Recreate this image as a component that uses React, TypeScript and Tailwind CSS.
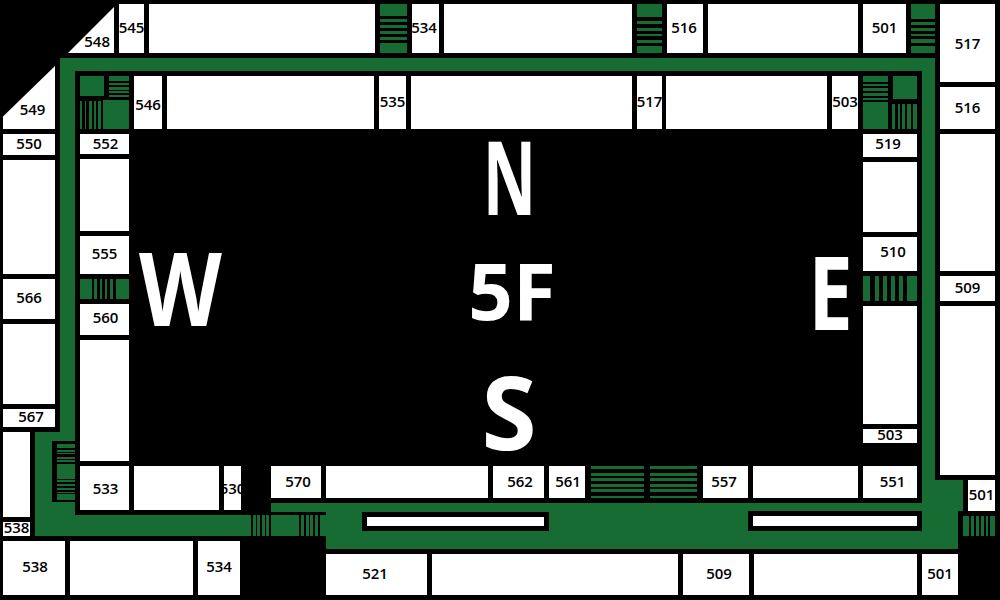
import type { ReactNode } from "react";

const G = "bg-[#166c32]";

function Room({ c, n, s }: { c: string; n?: string; s?: string }) {
  return (
    <div className={`${c} ${s ?? ""} shrink-0 bg-white flex items-center justify-center whitespace-nowrap text-[15px] leading-none font-semibold text-black`}>
      {n ? <span className="mb-[2px]">{n}</span> : null}
    </div>
  );
}

function Stair({ c, bars }: { c: string; bars: string[] }) {
  return (
    <div className={`${c} shrink-0 flex`}>
      {bars.map((b, k) => (
        <i key={k} className={`block ${G} ${b}`} />
      ))}
    </div>
  );
}

function Wing({ c, children }: { c: string; children: ReactNode }) {
  return <div className={`absolute flex gap-[5px] ${c}`}>{children}</div>;
}

const hStairA = ["h-[3px]", "h-[3px] mt-[4px]", "h-[3px] mt-[2px]", "h-[3px] mt-[3px]", "h-[3px] mt-[2px]", "h-[2px] mt-[4px]"];

const leftBlock = ["h-[4px]", "h-[2px] mt-[2px]", "h-[1px] mt-[1px]", "h-[2px] mt-[3px]", "h-[2px] mt-[1px]", "h-[15px] mt-[2px]", "h-[2px] mt-[1px]", "h-[2px] mt-[2px]", "h-[2px] mt-[2px]", "h-[1px] mt-[2px]", "h-[6px] mt-[1px]"];

const letters: [string, string, string][] = [
  ["left-[449px] top-[116px] w-[120px] h-[120px]", "N", "text-[102px] scale-x-[0.645]"],
  ["left-[449px] top-[351px] w-[120px] h-[120px]", "S", "text-[102px] scale-x-[0.98]"],
  ["left-[452px] top-[230px] w-[120px] h-[120px]", "5F", "text-[78px]"],
  ["left-[120px] top-[227px] w-[120px] h-[120px]", "W", "text-[102px] scale-x-[0.84]"],
  ["left-[771px] top-[231px] w-[120px] h-[120px]", "E", "text-[102px] scale-x-[0.78]"],
];

const greens = [
  "left-[60px] top-[58px] w-[875px] h-[13px]",
  "left-[60px] top-[58px] w-[15px] h-[478px]",
  "left-[35px] top-[432px] w-[40px] h-[104px]",
  "left-[35px] top-[515px] w-[291px] h-[21px]",
  "left-[271px] top-[503px] w-[55px] h-[9px]",
  "left-[326px] top-[503px] w-[632px] h-[46px]",
  "left-[922px] top-[58px] w-[13px] h-[445px]",
  "left-[922px] top-[480px] w-[41px] h-[31px]",
];

const corridorSlots = ["left-[251px] w-[20px]", "left-[299px] w-[21px]"];

export default function App() {
  return (
    <div className="relative w-[1000px] h-[600px] overflow-hidden bg-black [font-family:'Open_Sans','Noto_Sans',sans-serif]">
      {/* building corridor */}
      {greens.map((g) => (
        <div key={g} className={`absolute ${g} ${G}`} />
      ))}
      <div className="absolute left-[75px] top-[512px] w-[251px] h-[3px] bg-black" />

      {corridorSlots.map((s) => (
        <div key={s} className={`absolute ${s} top-[515px] h-[21px] flex`}>
          <i className="block w-[2px] bg-black" />
          <i className="block w-[2px] ml-[3px] bg-black" />
          <i className="block w-[2px] ml-[3px] bg-black" />
          <i className="block w-[2px] ml-[3px] bg-black" />
          <i className="block w-[2px] ml-[3px] bg-black" />
        </div>
      ))}

      {/* slots on the south corridor */}
      <div className="absolute left-[362px] top-[512px] w-[187px] h-[19px] p-[5px] bg-black">
        <div className="w-full h-full bg-white" />
      </div>
      <div className="absolute left-[748px] top-[511px] w-[174px] h-[20px] p-[5px] bg-black">
        <div className="w-full h-full bg-white" />
      </div>

      {/* south-west stair block */}
      <div className="absolute left-[52px] top-[441px] w-[23px] h-[61px] pl-[5px] pt-[3px] bg-black">
        <Stair c="h-[56px] flex-col" bars={leftBlock} />
      </div>

      {/* outer north row */}
      <Wing c="left-[68px] top-[4px] h-[49px]">
        <div className="w-[46px] h-full bg-white [clip-path:polygon(100%_3px,100%_100%,0_100%)] flex items-end justify-end pb-[4px] pr-[4px] text-[15px] leading-none font-semibold text-black">
          548
        </div>
        <Room c="w-[25px]" n="545" />
        <Room c="w-[226px]" />
        <Stair c="w-[27px] flex-col" bars={["h-[12px]", "h-[3px] mt-[3px]", "h-[3px] mt-[3px]", "h-[3px] mt-[3px]", "h-[3px] mt-[3px]", "h-[10px] mt-[3px]"]} />
        <Room c="w-[27px]" n="534" s="pr-[3px]" />
        <Room c="w-[188px]" />
        <Stair c="w-[25px] flex-col" bars={["h-[13px]", "h-[3px] mt-[4px]", "h-[3px] mt-[4px]", "h-[2px] mt-[3px]", "h-[3px] mt-[4px]", "h-[7px] mt-[3px]"]} />
        <Room c="w-[36px]" n="516" s="pr-[2px]" />
        <Room c="w-[150px]" />
        <Room c="w-[43px]" n="501" />
        <Stair c="w-[24px] flex-col" bars={["h-[15px]", "h-[3px] mt-[3px]", "h-[3px] mt-[3px]", "h-[2px] mt-[3px]", "h-[4px] mt-[3px]", "h-[7px] mt-[3px]"]} />
      </Wing>

      {/* outer east column */}
      <Wing c="left-[940px] top-[4px] w-[55px] flex-col">
        <Room c="h-[78px]" n="517" s="pt-[2px]" />
        <Room c="h-[42px]" n="516" />
        <Room c="h-[137px]" />
        <Room c="h-[25px]" n="509" />
        <Room c="h-[169px]" />
      </Wing>
      <Wing c="left-[968px] top-[480px] w-[27px] flex-col">
        <Room c="h-[31px]" n="501" />
      </Wing>
      <Stair c="absolute left-[963px] top-[516px] w-[32px] h-[20px]" bars={["w-[7px]", "w-[3px] ml-[2px]", "w-[3px] ml-[2px]", "w-[3px] ml-[2px]", "w-[3px] ml-[2px]", "w-[5px] ml-[2px]"]} />

      {/* outer south rows */}
      <Wing c="left-[3px] top-[541px] h-[54px]">
        <Room c="w-[62px]" n="538" s="pb-[2px] pl-[2px]" />
        <Room c="w-[123px]" />
        <Room c="w-[42px]" n="534" s="pb-[2px]" />
      </Wing>
      <Wing c="left-[326px] top-[554px] h-[41px]">
        <Room c="w-[101px]" n="521" s="pr-[3px]" />
        <Room c="w-[246px]" />
        <Room c="w-[66px]" n="509" s="pl-[6px]" />
        <Room c="w-[163px]" />
        <Room c="w-[36px]" n="501" />
      </Wing>

      {/* outer west column */}
      <Wing c="left-[3px] top-[66px] w-[52px] flex-col">
        <div className="h-[63px] bg-white [clip-path:polygon(100%_0,100%_100%,0_100%,0_80%)] flex items-end justify-center pb-[12px] pl-[7px] text-[15px] leading-none font-semibold text-black">
          549
        </div>
        <Room c="h-[21px]" n="550" />
        <Room c="h-[114px]" />
        <Room c="h-[40px]" n="566" s="pb-[2px]" />
        <Room c="h-[80px]" />
        <Room c="h-[18px]" n="567" s="pl-[4px] pb-[2px]" />
      </Wing>
      <Wing c="left-[3px] top-[432px] w-[27px] flex-col">
        <Room c="h-[85px]" />
        <Room c="h-[14px]" n="538" s="pb-[1px]" />
      </Wing>

      {/* inner north row */}
      <Wing c="left-[80px] top-[76px] h-[53px]">
        <div className="w-[49px] flex flex-col justify-between">
          <div className="flex justify-between items-start">
            <div className={`w-[24px] h-[20px] ${G}`} />
            <Stair c="w-[20px] h-[21px] flex-col" bars={["h-[5px]", "h-[2px] mt-[2px]", "h-[3px] mt-[2px]", "h-[2px] mt-[1px]", "h-[2px] mt-[2px]"]} />
          </div>
          <div className="flex h-[29px] justify-between">
            <Stair c="w-[23px] mt-[1px]" bars={["w-[2px]", "w-[1px] ml-[3px]", "w-[3px] ml-[3px]", "w-[2px] ml-[2px]", "w-[3px] ml-[2px]"]} />
            <div className={`w-[26px] ${G}`} />
          </div>
        </div>
        <Room c="w-[28px]" n="546" s="pt-[5px]" />
        <Room c="w-[207px]" />
        <Room c="w-[27px]" n="535" />
        <Room c="w-[221px]" />
        <Room c="w-[25px]" n="517" />
        <Room c="w-[161px] -ml-[1px]" />
        <Room c="w-[26px]" n="503" />
        <div className="w-[54px] flex flex-col justify-between">
          <div className="flex justify-between items-start">
            <Stair c="w-[25px] h-[24px] flex-col" bars={["h-[6px]", "h-[2px] mt-[2px]", "h-[3px] mt-[2px]", "h-[3px] mt-[2px]", "h-[2px] mt-[2px]"]} />
            <div className={`w-[24px] h-[23px] ${G}`} />
          </div>
          <div className="flex h-[27px] justify-between">
            <div className={`w-[25px] ${G}`} />
            <Stair c="w-[25px] mt-[2px]" bars={["w-[3px]", "w-[2px] ml-[3px]", "w-[3px] ml-[2px]", "w-[4px] ml-[2px]", "w-[4px] ml-[2px]"]} />
          </div>
        </div>
      </Wing>

      {/* inner west column */}
      <Wing c="left-[80px] top-[134px] w-[49px] flex-col">
        <Room c="h-[20px]" n="552" s="pl-[2px]" />
        <Room c="h-[72px]" />
        <Room c="h-[38px]" n="555" s="pb-[2px]" />
        <Stair c="h-[20px]" bars={["w-[12px]", "w-[3px] ml-[2px]", "w-[2px] ml-[3px]", "w-[2px] ml-[3px]", "w-[3px] ml-[3px]", "w-[13px] ml-[3px]"]} />
        <Room c="h-[31px]" n="560" s="pl-[2px] pb-[2px]" />
        <Room c="h-[121px]" />
      </Wing>

      {/* inner east column */}
      <Wing c="left-[863px] top-[134px] w-[54px] flex-col">
        <Room c="h-[23px]" n="519" s="pr-[4px] pb-[2px]" />
        <Room c="h-[70px]" />
        <Room c="h-[34px]" n="510" s="pl-[6px] pb-[3px]" />
        <Stair c="h-[25px]" bars={["w-[7px]", "w-[4px] ml-[5px]", "w-[4px] ml-[4px]", "w-[4px] ml-[4px]", "w-[4px] ml-[4px]", "w-[10px] ml-[4px]"]} />
        <Room c="h-[118px]" />
        <Room c="h-[14px]" n="503" s="pb-[1px]" />
      </Wing>

      {/* inner south row */}
      <Wing c="left-[80px] top-[466px] items-start">
        <Room c="w-[49px] h-[44px]" n="533" s="pl-[2px] pt-[2px]" />
        <Room c="w-[85px] h-[44px]" />
        <Room c="w-[17px] h-[44px]" n="530" s="pt-[2px]" />
        <Room c="w-[50px] h-[32px] ml-[25px]" n="570" s="pl-[4px]" />
        <Room c="w-[162px] h-[32px]" />
        <Room c="w-[51px] h-[32px]" n="562" s="pl-[3px]" />
        <Room c="w-[36px] h-[32px]" n="561" s="pl-[2px]" />
        <Stair c="w-[53px] h-[32px] ml-[1px] flex-col" bars={hStairA} />
        <Stair c="w-[47px] h-[32px] ml-[1px] flex-col" bars={hStairA} />
        <Room c="w-[45px] h-[32px] ml-[1px]" n="557" s="pr-[3px]" />
        <Room c="w-[105px] h-[32px]" />
        <Room c="w-[54px] h-[32px]" n="551" s="pl-[5px]" />
      </Wing>

      {/* compass and floor */}
      {letters.map(([box, t, size]) => (
        <div key={t} className={`absolute ${box} flex items-center justify-center leading-none font-bold text-white`}>
          <span className={`block ${size}`}>{t}</span>
        </div>
      ))}
    </div>
  );
}
